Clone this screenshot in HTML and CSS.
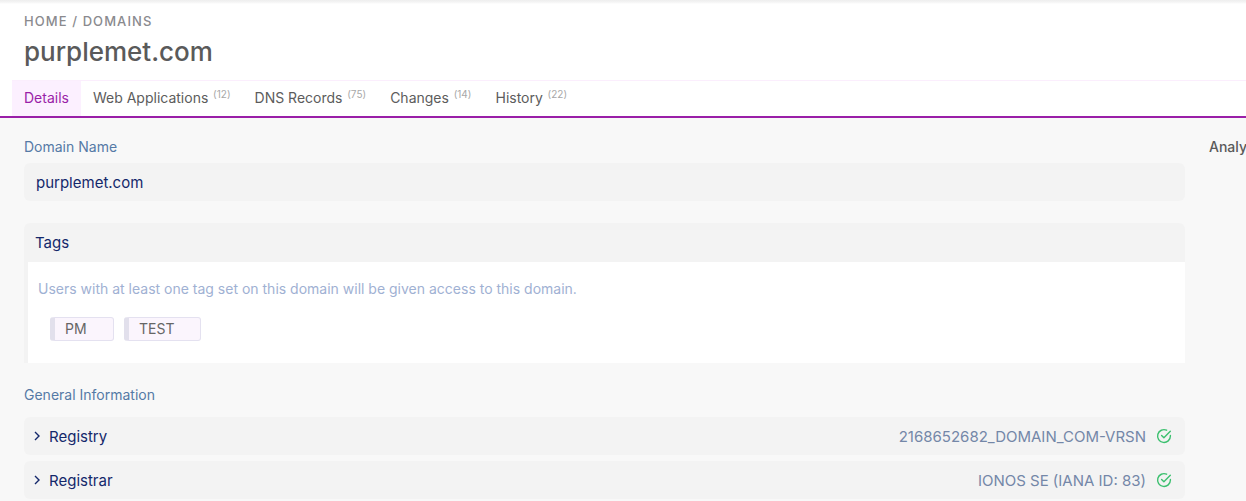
FILE: index.html
```html
<!DOCTYPE html>
<html lang="en">
<head>
<meta charset="utf-8">
<title>purplemet.com</title>
<link rel="stylesheet" href="styles.css">
</head>
<body>
<div class="page">
  <header class="head">
    <div class="crumb">Home / Domains</div>
    <h1 class="title">purplemet.com</h1>
  </header>
  <nav class="tabs">
    <a class="tab active">Details</a>
    <a class="tab">Web Applications <sup>(12)</sup></a>
    <a class="tab">DNS Records <sup>(75)</sup></a>
    <a class="tab">Changes <sup>(14)</sup></a>
    <a class="tab">History <sup>(22)</sup></a>
  </nav>
  <div class="content">
    <main class="main">
      <div class="label">Domain Name</div>
      <div class="input">purplemet.com</div>
      <section class="card">
        <div class="card-head">Tags</div>
        <div class="card-body">
          <p class="hint">Users with at least one tag set on this domain will be given access to this domain.</p>
          <div class="chips">
            <span class="chip chip-pm">PM</span>
            <span class="chip chip-test">TEST</span>
          </div>
        </div>
      </section>
      <div class="label label-general">General Information</div>
      <div class="row">
        <svg class="chev" viewBox="0 0 8 12" width="8" height="12"><path d="M2 2l4 4-4 4" fill="none" stroke="#14286b" stroke-width="1.4"/></svg>
        <span class="row-name">Registry</span>
        <span class="row-value">2168652682_DOMAIN_COM-VRSN</span>
        <svg class="ok" viewBox="0 0 16 16" width="16" height="16"><path d="M14.4 7.4v.6a6.4 6.4 0 1 1-3.8-5.8" fill="none" stroke="#3cc06f" stroke-width="1.4" stroke-linecap="round"/><path d="M5.6 7.4l2.3 2.3 6.4-6.4" fill="none" stroke="#3cc06f" stroke-width="1.4" stroke-linecap="round" stroke-linejoin="round"/></svg>
      </div>
      <div class="row">
        <svg class="chev" viewBox="0 0 8 12" width="8" height="12"><path d="M2 2l4 4-4 4" fill="none" stroke="#14286b" stroke-width="1.4"/></svg>
        <span class="row-name">Registrar</span>
        <span class="row-value">IONOS SE (IANA ID: 83)</span>
        <svg class="ok" viewBox="0 0 16 16" width="16" height="16"><path d="M14.4 7.4v.6a6.4 6.4 0 1 1-3.8-5.8" fill="none" stroke="#3cc06f" stroke-width="1.4" stroke-linecap="round"/><path d="M5.6 7.4l2.3 2.3 6.4-6.4" fill="none" stroke="#3cc06f" stroke-width="1.4" stroke-linecap="round" stroke-linejoin="round"/></svg>
      </div>
    </main>
    <aside class="side">Analytics</aside>
  </div>
</div>
</body>
</html>
```
FILE: styles.css
```css
* { box-sizing: border-box; }
html, body { margin: 0; height: 100%; overflow: hidden; }
body { font-family: Inter, sans-serif; background: #f8f8f8; color: #555; }
.page { width: 1246px; height: 501px; overflow: hidden; }
.head { background: linear-gradient(#eeeeee, #f4f4f4 2px, #ffffff 4px); height: 80px; padding: 14px 24px 0; }
.crumb { font-size: 13px; line-height: 15px; font-weight: 500; letter-spacing: 1.08px; text-transform: uppercase; color: #8a8a8e; }
.title { margin: 7px 0 0; font-size: 26px; line-height: 32px; font-weight: 500; color: #5a5a5a; }
.tabs { display: flex; background: #fff; height: 38px; padding-left: 12px; border-bottom: 2px solid #9a1fa8; position: relative; }
.tabs::before { content: ""; position: absolute; left: 12px; right: 0; top: 0; height: 1px; background: #fbeefd; }
.tab { display: block; padding: 0 12px; font-size: 14px; line-height: 36px; color: #5c5c5c; white-space: nowrap; }
.tab sup { font-size: 10px; line-height: 0; color: #a8a8a8; vertical-align: 5.5px; margin-left: 0.8px; }
.tab.active { background: #fcf0ff; color: #9a1fa8; }
.content { display: flex; padding: 0 0 0 24px; }
.main { width: 1161px; flex: none; padding-top: 21px; }
.side { flex: none; width: 100px; margin-left: 24px; padding-top: 20px; font-size: 14px; line-height: 17px; font-weight: 500; color: #5a5a5a; white-space: nowrap; }
.label { font-size: 14px; line-height: 16px; color: #557aa6; }
.input { margin-top: 8px; height: 38px; padding: 0 12px; background: #f3f3f3; border-radius: 6px; font-size: 15px; line-height: 39px; color: #14286b; }
.card { margin-top: 22px; height: 140px; background: #f3f3f3; border-radius: 6px 6px 0 0; padding-left: 4px; }
.card-head { height: 39px; margin-left: -4px; padding-left: 11px; font-size: 15px; line-height: 39px; color: #14286b; }
.card-body { height: 101px; background: #fff; padding: 19px 10px 0; }
.hint { margin: 0; font-size: 14px; line-height: 16px; color: #9fb1d3; }
.chips { display: flex; gap: 10px; margin: 20px 0 0 12px; }
.chip { display: block; height: 24px; padding-left: 10px; font-size: 14px; line-height: 22px; color: #666; background: #fbf5fd; border: 1px solid #e4e1f0; border-left: 5px solid #e2e0ec; border-radius: 3px; }
.chip-pm { width: 64px; }
.chip-test { width: 77px; }
.label-general { margin-top: 24px; }
.row { display: flex; align-items: center; height: 38px; margin-top: 6px; padding: 0 13px 0 9px; background: #f3f3f3; border-radius: 6px; font-size: 15px; }
.label-general + .row { margin-top: 14px; }
.chev { flex: none; }
.row-name { margin-left: 8px; color: #14286b; flex: 1; }
.row-value { color: #7487a8; }
.ok { flex: none; margin-left: 10px; }
```
